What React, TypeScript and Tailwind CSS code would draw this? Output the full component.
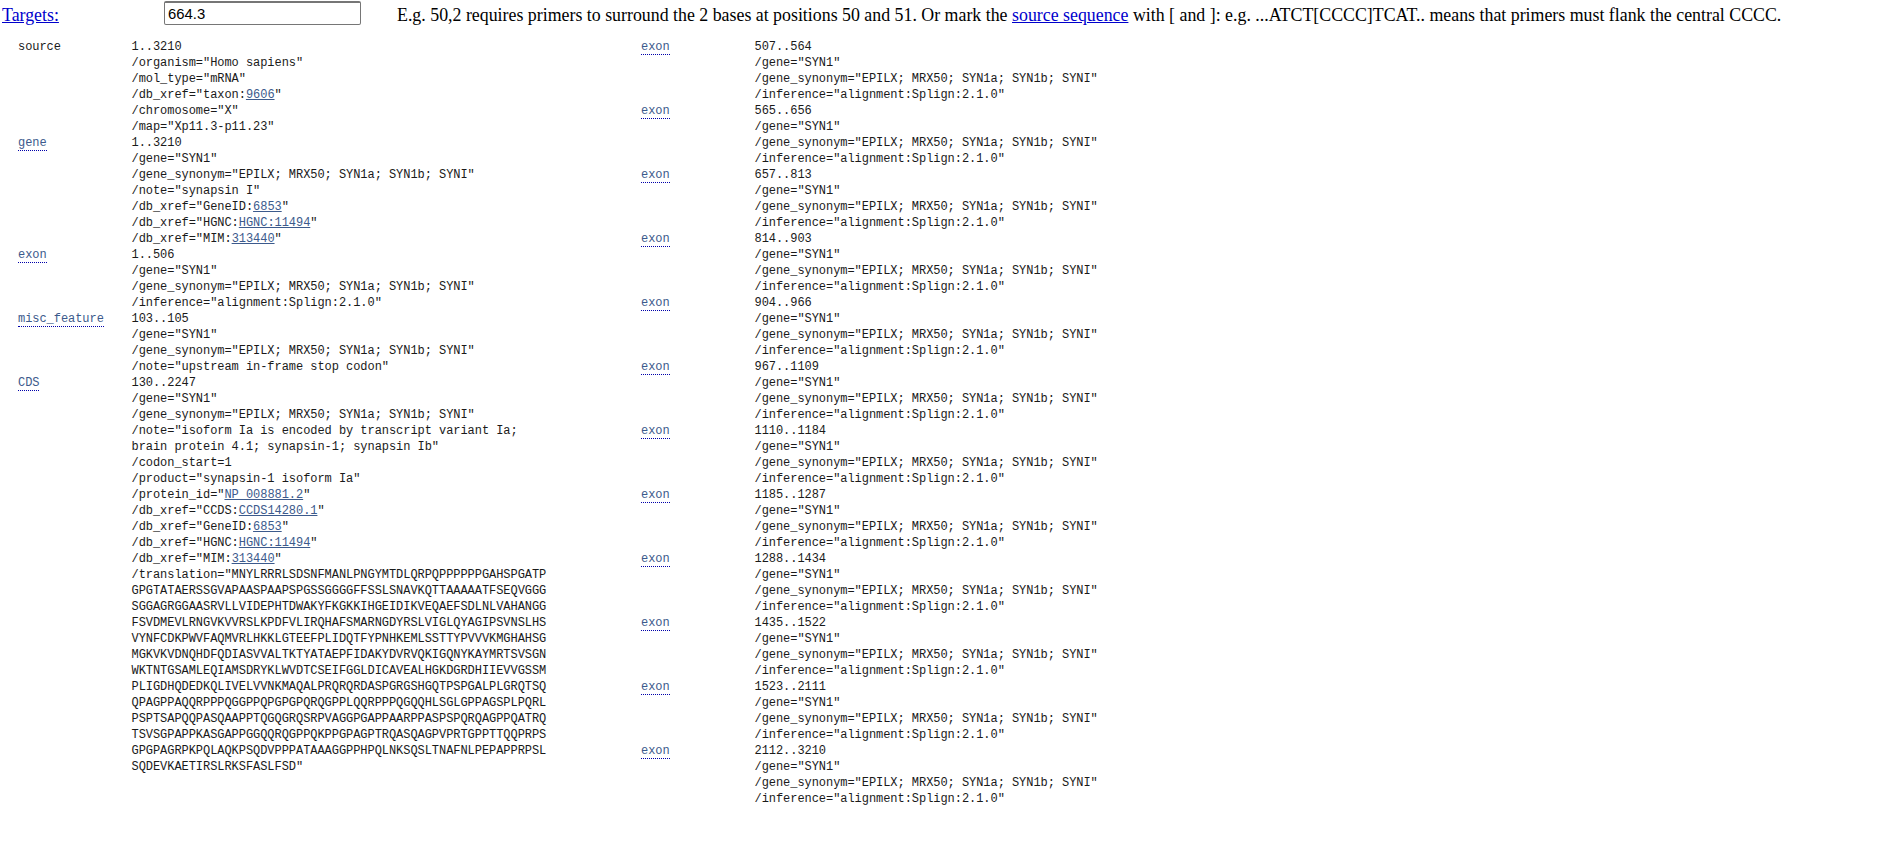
const SYN = '/gene_synonym="EPILX; MRX50; SYN1a; SYN1b; SYNI"';
const INF = '/inference="alignment:Splign:2.1.0"';

function L({ children }: { children: string }) {
  return <a href="#" className="text-[#3c5a8c] underline">{children}</a>;
}

function Feature({ name, linked = true, children }: { name: string; linked?: boolean; children: React.ReactNode }) {
  return (
    <div className="flex">
      <div className="w-[113.5px] shrink-0">
        {linked ? (
          <a href="#" className="text-[#3c5a8c] border-b border-dotted border-[#0000aa]">{name}</a>
        ) : (
          <span>{name}</span>
        )}
      </div>
      <div>{children}</div>
    </div>
  );
}

function Line({ children }: { children: React.ReactNode }) {
  return <div className="h-4 whitespace-pre">{children}</div>;
}

const translation = [
  '/translation="MNYLRRRLSDSNFMANLPNGYMTDLQRPQPPPPPPGAHSPGATP',
  'GPGTATAERSSGVAPAASPAAPSPGSSGGGGFFSSLSNAVKQTTAAAAATFSEQVGGG',
  'SGGAGRGGAASRVLLVIDEPHTDWAKYFKGKKIHGEIDIKVEQAEFSDLNLVAHANGG',
  'FSVDMEVLRNGVKVVRSLKPDFVLIRQHAFSMARNGDYRSLVIGLQYAGIPSVNSLHS',
  'VYNFCDKPWVFAQMVRLHKKLGTEEFPLIDQTFYPNHKEMLSSTTYPVVVKMGHAHSG',
  'MGKVKVDNQHDFQDIASVVALTKTYATAEPFIDAKYDVRVQKIGQNYKAYMRTSVSGN',
  'WKTNTGSAMLEQIAMSDRYKLWVDTCSEIFGGLDICAVEALHGKDGRDHIIEVVGSSM',
  'PLIGDHQDEDKQLIVELVVNKMAQALPRQRQRDASPGRGSHGQTPSPGALPLGRQTSQ',
  'QPAGPPAQQRPPPQGGPPQPGPGPQRQGPPLQQRPPPQGQQHLSGLGPPAGSPLPQRL',
  'PSPTSAPQQPASQAAPPTQGQGRQSRPVAGGPGAPPAARPPASPSPQRQAGPPQATRQ',
  'TSVSGPAPPKASGAPPGGQQRQGPPQKPPGPAGPTRQASQAGPVPRTGPPTTQQPRPS',
  'GPGPAGRPKPQLAQKPSQDVPPPATAAAGGPPHPQLNKSQSLTNAFNLPEPAPPRPSL',
  'SQDEVKAETIRSLRKSFASLFSD"',
];

const exons = [
  '507..564', '565..656', '657..813', '814..903', '904..966', '967..1109',
  '1110..1184', '1185..1287', '1288..1434', '1435..1522', '1523..2111', '2112..3210',
];

export default function App() {
  return (
    <div className="bg-white text-black">
      <div className="flex items-start h-[39px] font-['Liberation_Serif',serif] text-[17.85px] leading-5">
        <a href="#" className="ml-[2px] w-[162px] mt-[5px] text-[#0000cc] underline">Targets:</a>
        <input
          readOnly
          value="664.3"
          className="w-[197px] h-6 mt-px px-[3px] border border-t-2 border-[#767676] rounded-[2px] font-['Liberation_Sans',sans-serif] text-[14.85px] text-black"
        />
        <p className="ml-[36px] mt-[5px] whitespace-nowrap">
          E.g. 50,2 requires primers to surround the 2 bases at positions 50 and 51. Or mark the{' '}
          <a href="#" className="text-[#0000cc] underline">source sequence</a>{' '}
          with [ and ]: e.g. ...ATCT[CCCC]TCAT.. means that primers must flank the central CCCC.
        </p>
      </div>
      <div className="flex pl-[18px] font-['Liberation_Mono',monospace] text-[12px] leading-4 tracking-[-0.05px] text-[#1a1a1a]">
        <div className="w-[623px] shrink-0">
          <Feature name="source" linked={false}>
            <Line>1..3210</Line>
            <Line>/organism="Homo sapiens"</Line>
            <Line>/mol_type="mRNA"</Line>
            <Line>/db_xref="taxon:<L>9606</L>"</Line>
            <Line>/chromosome="X"</Line>
            <Line>/map="Xp11.3-p11.23"</Line>
          </Feature>
          <Feature name="gene">
            <Line>1..3210</Line>
            <Line>/gene="SYN1"</Line>
            <Line>{SYN}</Line>
            <Line>/note="synapsin I"</Line>
            <Line>/db_xref="GeneID:<L>6853</L>"</Line>
            <Line>/db_xref="HGNC:<L>HGNC:11494</L>"</Line>
            <Line>/db_xref="MIM:<L>313440</L>"</Line>
          </Feature>
          <Feature name="exon">
            <Line>1..506</Line>
            <Line>/gene="SYN1"</Line>
            <Line>{SYN}</Line>
            <Line>{INF}</Line>
          </Feature>
          <Feature name="misc_feature">
            <Line>103..105</Line>
            <Line>/gene="SYN1"</Line>
            <Line>{SYN}</Line>
            <Line>/note="upstream in-frame stop codon"</Line>
          </Feature>
          <Feature name="CDS">
            <Line>130..2247</Line>
            <Line>/gene="SYN1"</Line>
            <Line>{SYN}</Line>
            <Line>/note="isoform Ia is encoded by transcript variant Ia;</Line>
            <Line>brain protein 4.1; synapsin-1; synapsin Ib"</Line>
            <Line>/codon_start=1</Line>
            <Line>/product="synapsin-1 isoform Ia"</Line>
            <Line>/protein_id="<L>NP_008881.2</L>"</Line>
            <Line>/db_xref="CCDS:<L>CCDS14280.1</L>"</Line>
            <Line>/db_xref="GeneID:<L>6853</L>"</Line>
            <Line>/db_xref="HGNC:<L>HGNC:11494</L>"</Line>
            <Line>/db_xref="MIM:<L>313440</L>"</Line>
            {translation.map((t) => (
              <Line key={t}>{t}</Line>
            ))}
          </Feature>
        </div>
        <div>
          {exons.map((range) => (
            <Feature key={range} name="exon">
              <Line>{range}</Line>
              <Line>/gene="SYN1"</Line>
              <Line>{SYN}</Line>
              <Line>{INF}</Line>
            </Feature>
          ))}
        </div>
      </div>
    </div>
  );
}
